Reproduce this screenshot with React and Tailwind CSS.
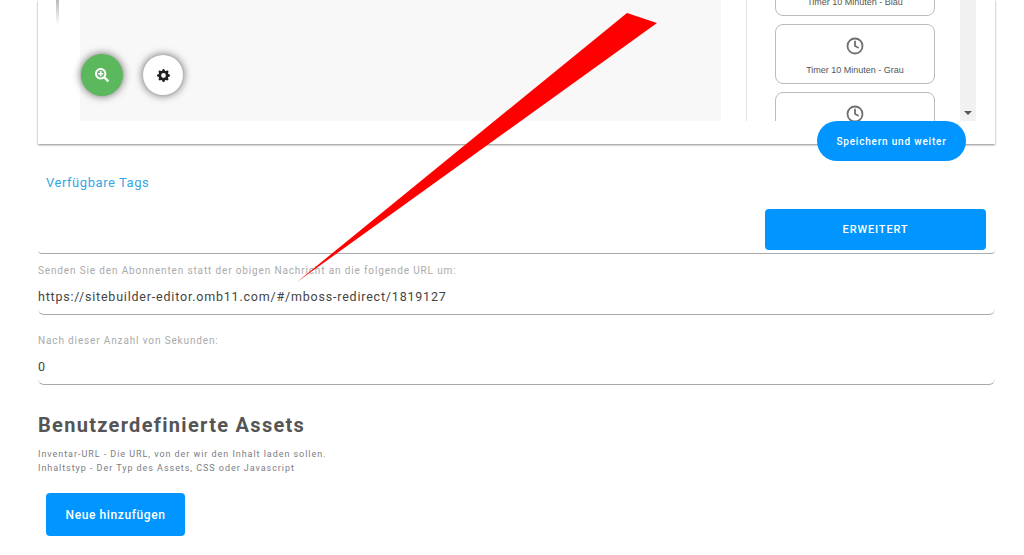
import { Clock } from "lucide-react";
import { FaSearchPlus } from "react-icons/fa";
import { BsGearFill } from "react-icons/bs";

function Tile({ label }) {
  return (
    <div className="h-[60px] w-[160px] shrink-0 rounded-[8px] border border-[#bbb] bg-white flex flex-col items-center pt-[12px]">
      <Clock size={18} strokeWidth={2.4} color="#6f6f6f" />
      {label && (
        <span className="mt-[9px] text-[9px] leading-[12px] text-[#555] font-['Liberation_Sans',sans-serif]">
          {label}
        </span>
      )}
    </div>
  );
}

function Field({ label, value, className }) {
  return (
    <div className={`${className} h-[61px] border-b border-[#aaa] rounded-b-[6px]`}>
      <div className="text-[10px] leading-[12px] tracking-[0.86px] text-[#aaa]">{label}</div>
      <div className="mt-[11px] text-[12.5px] leading-[18px] tracking-[0.8px] text-[#444]">{value}</div>
    </div>
  );
}

export default function App() {
  return (
    <div className="relative h-[555px] w-[1024px] overflow-hidden bg-white font-['Roboto',sans-serif]">
      <div className="ml-[38px] w-[957px]">
        {/* editor card, scrolled so only its bottom shows */}
        <div className="relative h-[144px] bg-white shadow-[0_1px_2px_rgba(0,0,0,0.45)] flex">
          <div className="w-[42px] shrink-0 pl-[18px]">
            <div className="h-[25px] w-[3px] bg-gradient-to-b from-[#bbb] to-white"></div>
          </div>
          <div className="h-[121px] w-[641px] shrink-0 bg-[#f8f8f8]"></div>

          <div className="ml-[25px] h-[121px] w-[230px] border-l border-[#e4e4e4] flex overflow-hidden">
            <div className="ml-[28px] mt-[-44px] flex flex-col gap-[8px]">
              <Tile label="Timer 10 Minuten - Blau" />
              <Tile label="Timer 10 Minuten - Grau" />
              <Tile />
            </div>
            <div className="ml-[25px] h-[121px] w-[16px] bg-[#f1f1f1] flex items-end justify-center pb-[6px]">
              <div className="h-0 w-0 border-x-[4px] border-t-[4px] border-x-transparent border-t-[#555]"></div>
            </div>
          </div>

          {/* floating buttons */}
          <div className="absolute left-[43px] top-[54px] flex h-[42px] w-[42px] items-center justify-center rounded-full bg-[#5cb85c] shadow-[0_0_8px_rgba(0,0,0,0.6)]">
            <FaSearchPlus size={14} color="#fff" />
          </div>
          <div className="absolute left-[105px] top-[55px] flex h-[40px] w-[40px] items-center justify-center rounded-full bg-white shadow-[0_0_8px_rgba(0,0,0,0.65)]">
            <BsGearFill size={13} color="#222" />
          </div>
          <div className="absolute left-[779px] top-[121px] flex h-[40px] w-[149px] items-center justify-center rounded-full bg-[#0095ff] text-[10px] font-medium tracking-[0.8px] text-white">
            Speichern und weiter
          </div>
        </div>

        <div className="mt-[30px] ml-[8px] text-[13px] leading-[17px] tracking-[0.55px] text-[#35a7e4]">
          Verfügbare Tags
        </div>

        <div className="mt-[18px] flex h-[45px] justify-end border-b border-[#aaa] rounded-b-[4px] pr-[9px]">
          <div className="flex h-[41px] w-[221px] items-center justify-center rounded-[4px] bg-[#0095ff] pt-[1px] text-[11px] font-medium tracking-[0.85px] text-white">
            ERWEITERT
          </div>
        </div>

        <Field
          className="pt-[11px]"
          label="Senden Sie den Abonnenten statt der obigen Nachricht an die folgende URL um:"
          value="https://sitebuilder-editor.omb11.com/#/mboss-redirect/1819127"
        />
        <Field className="mt-[9px] pt-[11px]" label="Nach dieser Anzahl von Sekunden:" value="0" />

        <h2 className="mt-[27px] text-[20px] leading-[26px] font-bold tracking-[1.3px] text-[#555]">
          Benutzerdefinierte Assets
        </h2>
        <div className="mt-[9px] text-[9px] leading-[14px] tracking-[0.95px] text-[#7c7c84]">
          <div>Inventar-URL - Die URL, von der wir den Inhalt laden sollen.</div>
          <div>Inhaltstyp - Der Typ des Assets, CSS oder Javascript</div>
        </div>
        <div className="ml-[8px] mt-[18px] flex h-[43px] w-[139px] items-center justify-center rounded-[4px] bg-[#0095ff] text-[12px] font-medium tracking-[0.6px] text-white">
          Neue hinzufügen
        </div>
      </div>

      {/* red annotation arrow drawn over the page */}
      <svg className="absolute left-0 top-0 pointer-events-none" width="1024" height="555">
        <polygon points="627,13 657,23 297,282" fill="#ff0000" />
      </svg>
    </div>
  );
}
